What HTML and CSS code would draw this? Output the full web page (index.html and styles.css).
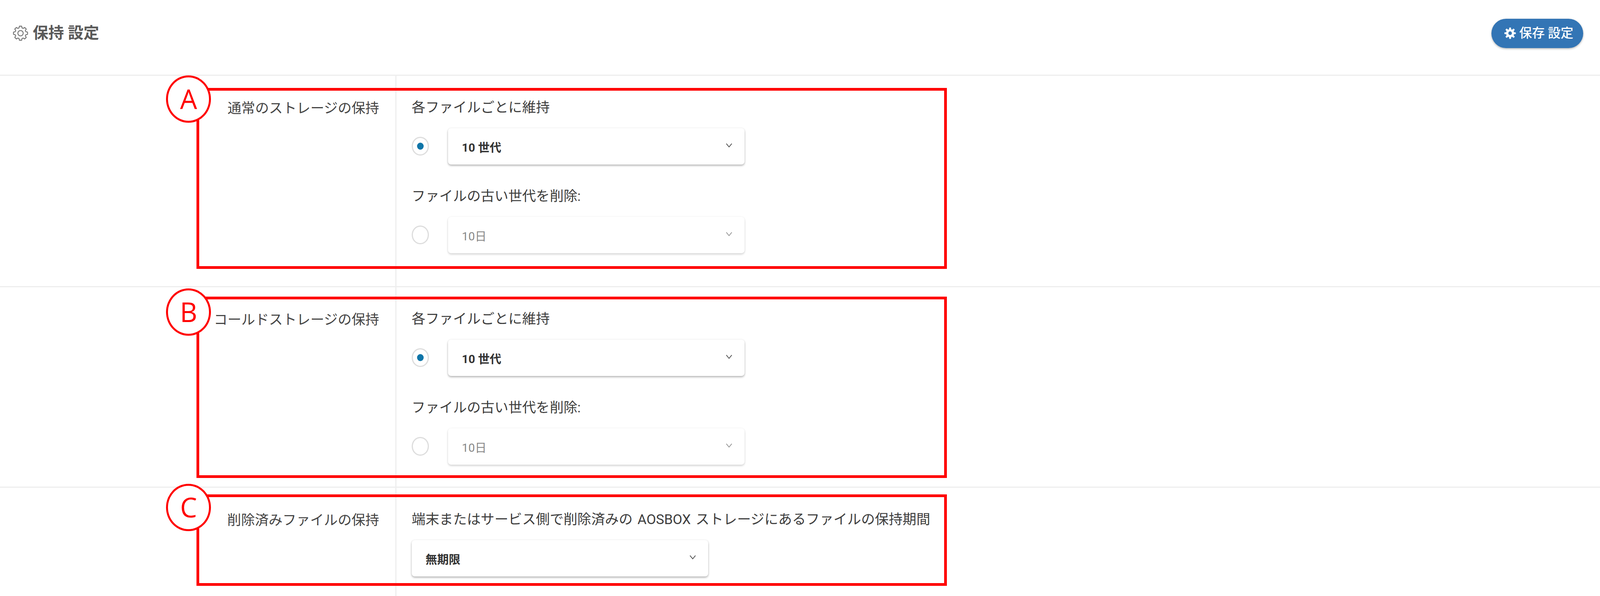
FILE: index.html
```html
<!DOCTYPE html>
<html lang="ja">
<head>
<meta charset="utf-8">
<title>保持 設定</title>
<link rel="stylesheet" href="styles.css">
</head>
<body>
<div class="page">
  <header class="header">
    <h1 class="title">
      <svg class="title-gear" viewBox="-21.5 -21.5 43 43"><path d="M-3.13-19.75L3.13-19.75L4.27-14.9L7.51-13.56L11.76-16.18L16.18-11.76L13.56-7.51L14.9-4.27L19.75-3.13L19.75 3.13L14.9 4.27L13.56 7.51L16.18 11.76L11.76 16.18L7.51 13.56L4.27 14.9L3.13 19.75L-3.13 19.75L-4.27 14.9L-7.51 13.56L-11.76 16.18L-16.18 11.76L-13.56 7.51L-14.9 4.27L-19.75 3.13L-19.75-3.13L-14.9-4.27L-13.56-7.51L-16.18-11.76L-11.76-16.18L-7.51-13.56L-4.27-14.9Z"/><circle r="7.5"/></svg>
      <span>保持 設定</span>
    </h1>
    <button class="save" type="button">
      <svg class="save-gear" viewBox="-22.5 -22.5 45 45"><path fill-rule="evenodd" d="M-3.13-22L3.13-22L4.27-14.9L7.51-13.56L13.5-18L18-13.5L13.56-7.51L14.9-4.27L22-3.13L22 3.13L14.9 4.27L13.56 7.51L18 13.5L13.5 18L7.51 13.56L4.27 14.9L3.13 22L-3.13 22L-4.27 14.9L-7.51 13.56L-13.5 18L-18 13.5L-13.56 7.51L-14.9 4.27L-22 3.13L-22-3.13L-14.9-4.27L-13.56-7.51L-18-13.5L-13.5-18L-7.51-13.56L-4.27-14.9ZM7 0A7 7 0 1 0-7 0A7 7 0 1 0 7 0Z"/></svg>
      <span>保存 設定</span>
    </button>
  </header>

  <section class="row row-first">
    <div class="row-label">通常のストレージの保持</div>
    <div class="row-body">
      <div class="field-label">各ファイルごとに維持</div>
      <div class="choice">
        <span class="radio radio-on"></span>
        <div class="select">
          <span>10 世代</span>
          <svg class="chev" viewBox="0 0 18 12" preserveAspectRatio="none"><polyline points="1.5,1.5 9,10 16.5,1.5"/></svg>
        </div>
      </div>
      <div class="field-label field-label-next">ファイルの古い世代を削除:</div>
      <div class="choice">
        <span class="radio"></span>
        <div class="select select-off">
          <span>10日</span>
          <svg class="chev" viewBox="0 0 18 12" preserveAspectRatio="none"><polyline points="1.5,1.5 9,10 16.5,1.5"/></svg>
        </div>
      </div>
    </div>
  </section>

  <section class="row row-second">
    <div class="row-label">コールドストレージの保持</div>
    <div class="row-body">
      <div class="field-label">各ファイルごとに維持</div>
      <div class="choice">
        <span class="radio radio-on"></span>
        <div class="select">
          <span>10 世代</span>
          <svg class="chev" viewBox="0 0 18 12" preserveAspectRatio="none"><polyline points="1.5,1.5 9,10 16.5,1.5"/></svg>
        </div>
      </div>
      <div class="field-label field-label-next">ファイルの古い世代を削除:</div>
      <div class="choice">
        <span class="radio"></span>
        <div class="select select-off">
          <span>10日</span>
          <svg class="chev" viewBox="0 0 18 12" preserveAspectRatio="none"><polyline points="1.5,1.5 9,10 16.5,1.5"/></svg>
        </div>
      </div>
    </div>
  </section>

  <section class="row row-last">
    <div class="row-label">削除済みファイルの保持</div>
    <div class="row-body">
      <div class="field-label field-label-wide">端末またはサービス側で削除済みの AOSBOX ストレージにあるファイルの保持期間</div>
      <div class="choice">
        <div class="select">
          <span>無期限</span>
          <svg class="chev" viewBox="0 0 18 12" preserveAspectRatio="none"><polyline points="1.5,1.5 9,10 16.5,1.5"/></svg>
        </div>
      </div>
    </div>
  </section>

  <div class="frame frame-a"></div>
  <div class="frame frame-b"></div>
  <div class="frame frame-c"></div>
  <div class="badge badge-a">A</div>
  <div class="badge badge-b">B</div>
  <div class="badge badge-c">C</div>
</div>
</body>
</html>
```

FILE: styles.css
```css
/* Horizontal sizes and type are fluid: 1 unit = 1px in a 4400px wide window. */
:root { --u: calc(100vw / 4400); }
* { box-sizing: border-box; }
html, body { margin: 0; padding: 0; background: #fff; }
body {
  font-family: Roboto, "Noto Sans CJK JP", sans-serif;
  color: #444;
}
.page {
  position: relative;
  min-height: 100vh;
  display: flex;
  flex-direction: column;
  overflow: hidden;
}

/* header */
.header {
  display: flex;
  justify-content: space-between;
  align-items: center;
  height: 194px;
  padding: 49px calc(46 * var(--u)) 70px calc(35 * var(--u));
  border-bottom: 3px solid #eee;
}
.title {
  display: flex;
  align-items: center;
  gap: calc(13 * var(--u));
  margin: 0;
  font-size: calc(43 * var(--u));
  font-weight: 700;
  line-height: 50px;
  color: #5a5a5a;
}
.title-gear { width: calc(42 * var(--u)); height: 42px; }
.title-gear path, .title-gear circle {
  fill: none;
  stroke: #777;
  stroke-width: 2.6;
  stroke-linejoin: round;
}
.save {
  display: flex;
  align-items: center;
  gap: calc(9 * var(--u));
  width: calc(253 * var(--u));
  height: 75px;
  padding: 0 0 0 calc(36 * var(--u));
  border: 0;
  border-radius: 38px;
  background: #3375b5;
  box-shadow: 0 2px 5px rgba(0, 0, 0, .3);
  color: #fff;
  font-family: inherit;
  font-size: calc(35 * var(--u));
  font-weight: 500;
  line-height: 1;
}
.save-gear { width: calc(32 * var(--u)); height: 32px; fill: #fff; }

/* rows */
.row {
  display: grid;
  grid-template-columns: calc(1090 * var(--u)) 1fr;
  border-bottom: 3px solid #eee;
}
.row-first { height: 541px; }
.row-second { height: 513px; }
.row-last { flex: 1; border-bottom: 0; }
.row-label {
  padding: 58px calc(44 * var(--u)) 0 0;
  border-right: 3px solid #eee;
  text-align: right;
  font-size: calc(38 * var(--u));
  line-height: 50px;
}
.row-body { padding: 56px 0 0 calc(42 * var(--u)); }
.field-label {
  font-size: calc(38 * var(--u));
  line-height: 50px;
  color: #3d3d3d;
}
.field-label-next { margin-top: 56px; }
.field-label-wide { word-spacing: calc(4 * var(--u)); }

/* controls */
.choice {
  display: flex;
  align-items: center;
  gap: calc(52 * var(--u));
  margin-top: 28px;
}
.radio {
  position: relative;
  flex: none;
  width: calc(48 * var(--u));
  height: 48px;
  margin-bottom: 2px;
  border: 3px solid #ddd;
  border-radius: 50%;
  background: #fff;
}
.radio-on::after {
  content: "";
  position: absolute;
  left: 50%;
  top: 50%;
  width: calc(18 * var(--u));
  height: 18px;
  border-radius: 50%;
  background: #0f75a8;
  transform: translate(-50%, -50%);
}
.select {
  display: flex;
  align-items: center;
  justify-content: space-between;
  width: calc(816 * var(--u));
  height: 93px;
  padding: 0 calc(34 * var(--u)) 0 calc(38 * var(--u));
  border-radius: 8px;
  background: #fff;
  box-shadow: 0 3px 5px rgba(0, 0, 0, .28), 0 0 5px rgba(0, 0, 0, .07);
  font-size: calc(32 * var(--u));
  font-weight: 700;
  color: #333;
}
.select-off {
  font-weight: 400;
  color: #888;
  box-shadow: 0 3px 5px rgba(0, 0, 0, .16), 0 0 5px rgba(0, 0, 0, .05);
}
.chev {
  width: calc(18 * var(--u));
  height: 12px;
  margin-bottom: 5px;
  fill: none;
  stroke: #555;
  stroke-width: 2;
}
.select-off .chev { stroke: #999; }

/* annotations laid over the page */
.frame {
  position: absolute;
  left: calc(540 * var(--u));
  width: calc(2064 * var(--u));
  border: 7px solid #f00;
}
.frame-a { top: 225px; height: 463px; }
.frame-b { top: 759px; height: 464px; }
.frame-c { top: 1265px; height: 234px; }
.badge {
  position: absolute;
  left: calc(457 * var(--u));
  width: calc(123 * var(--u));
  height: 121px;
  border: 5px solid #f00;
  border-radius: 50%;
  background: #fff;
  color: #f00;
  font-family: "Open Sans", sans-serif;
  font-size: calc(74 * var(--u));
  line-height: 108px;
  text-align: center;
}
.badge-a { top: 193px; }
.badge-b { top: 738px; }
.badge-c { top: 1238px; }
```
